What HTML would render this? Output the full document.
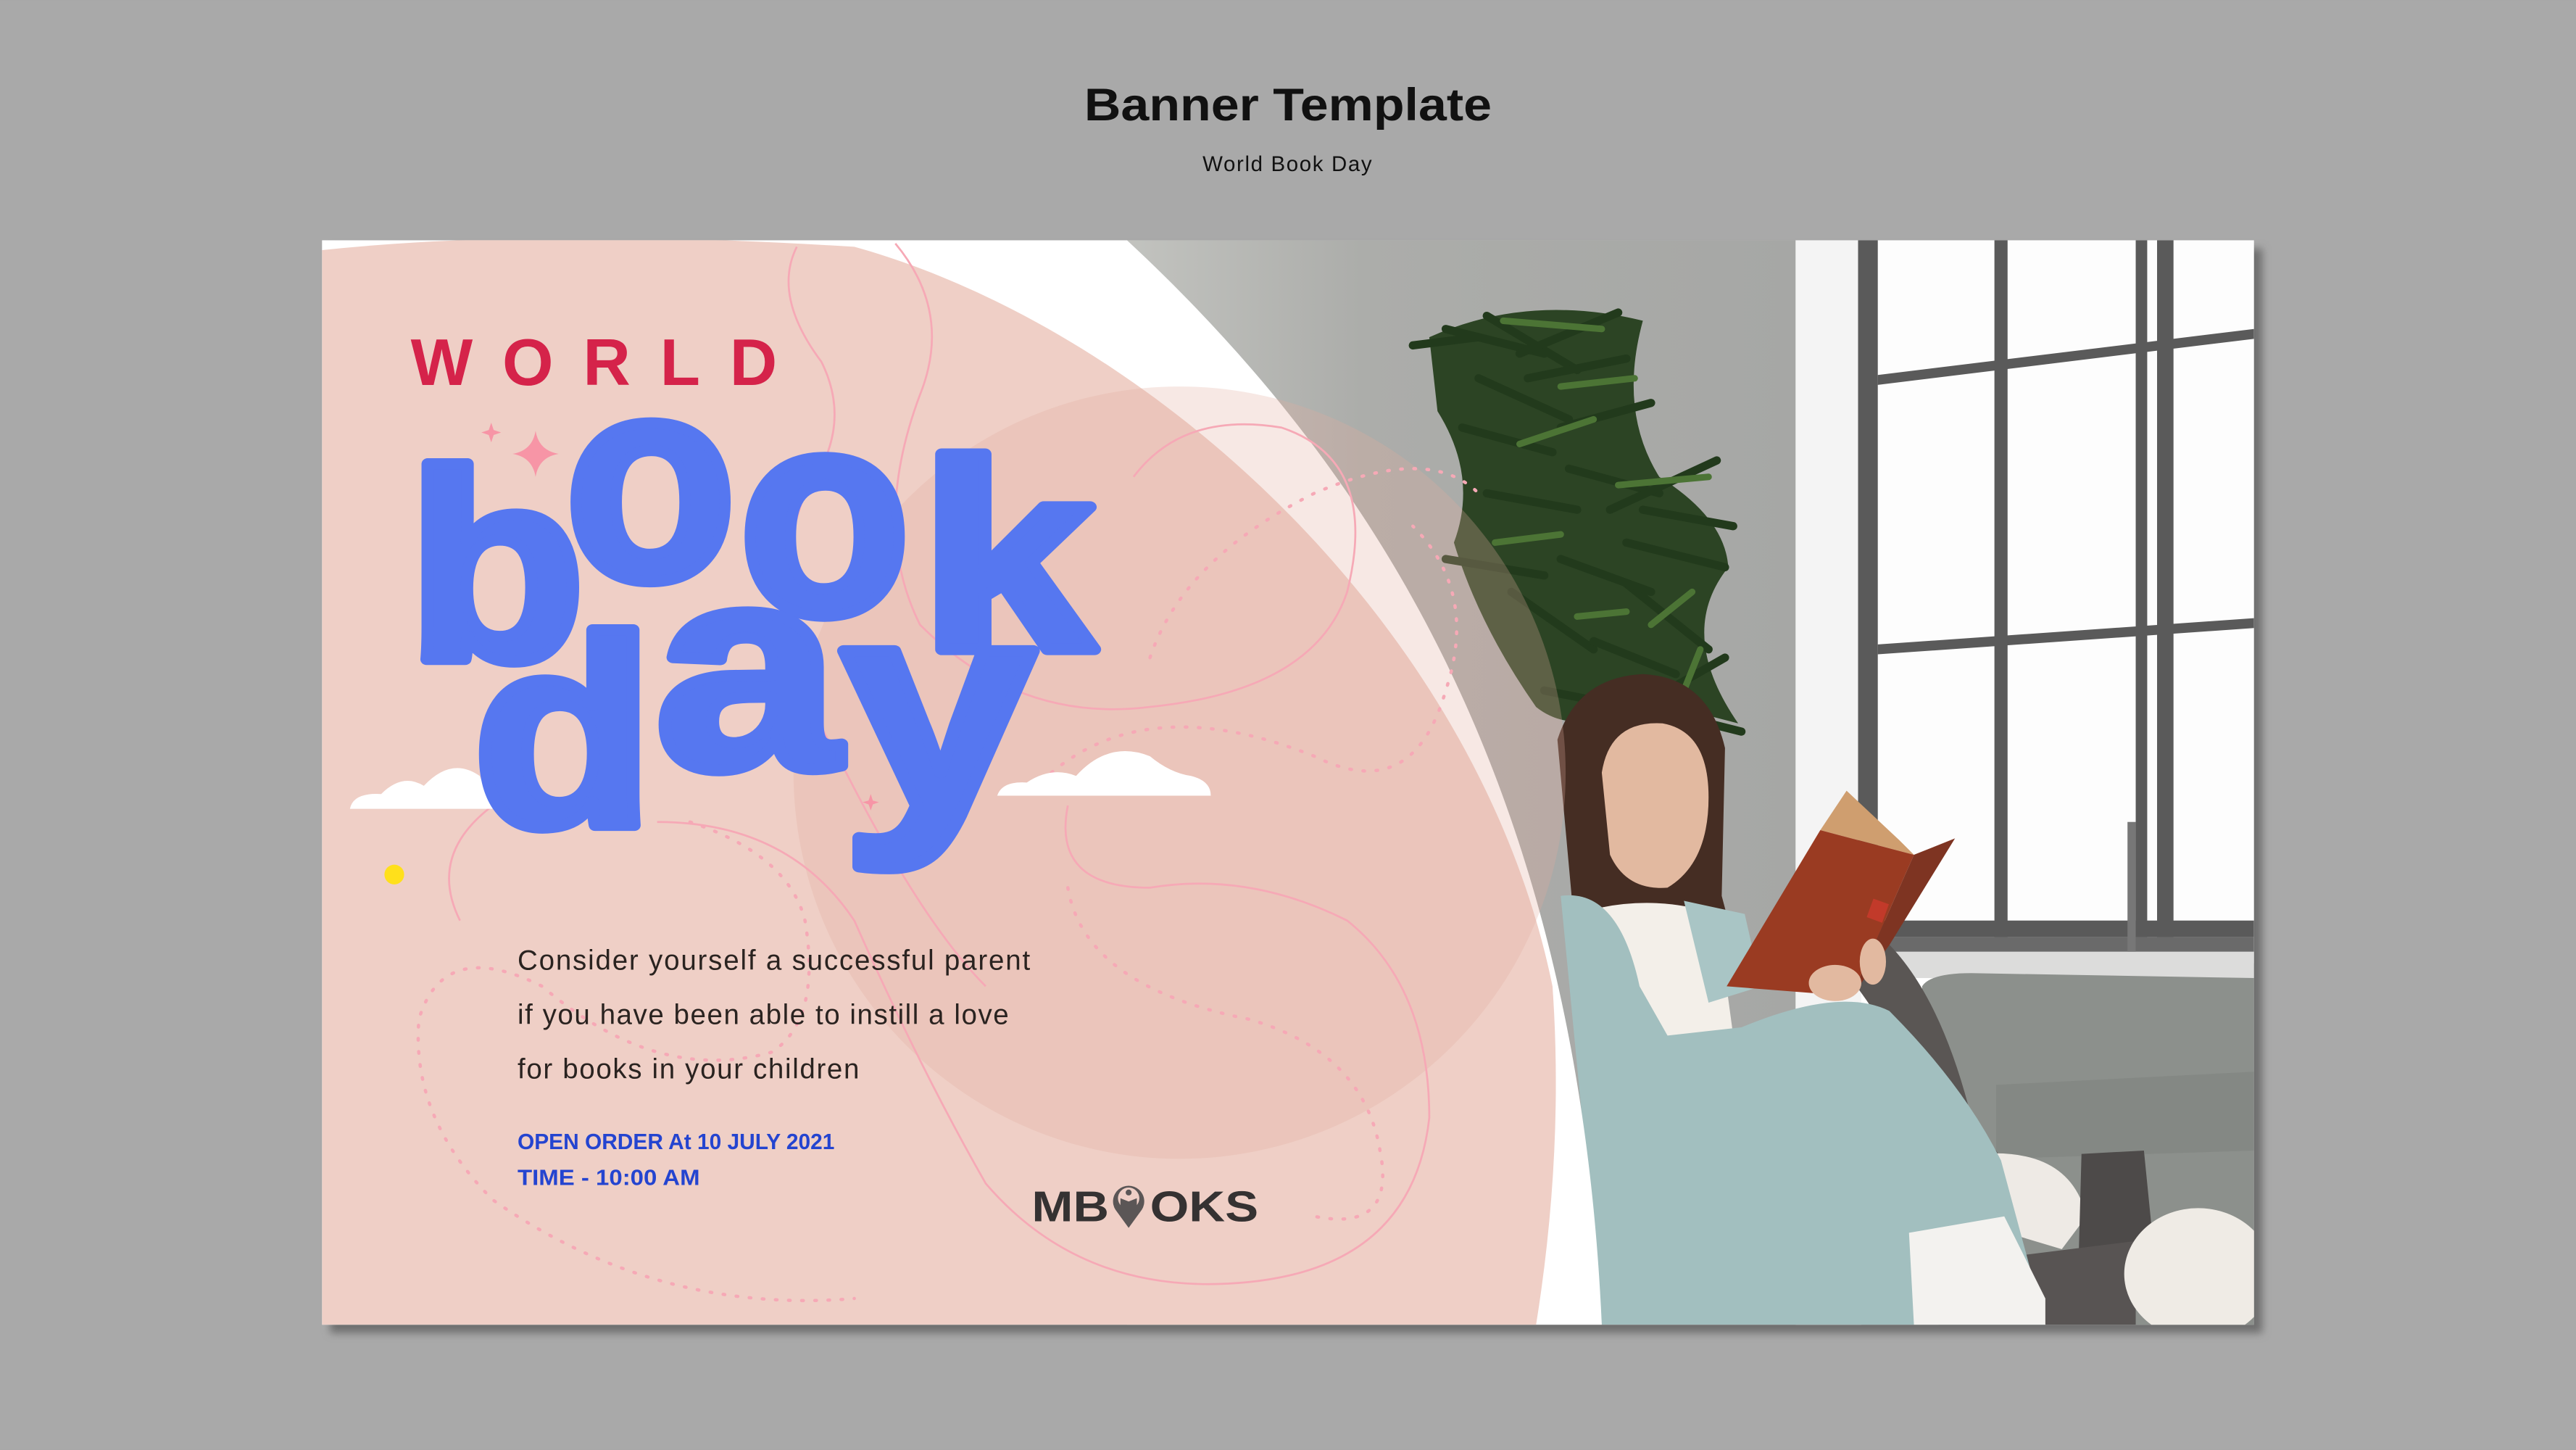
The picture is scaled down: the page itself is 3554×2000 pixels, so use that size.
<!DOCTYPE html>
<html><head><meta charset="utf-8"><style>
html,body{margin:0;padding:0;background:#a9a9a9;}
svg{display:block}
</style></head><body>
<svg width="3554" height="2000" viewBox="0 0 1568 882" xmlns="http://www.w3.org/2000/svg" font-family="Liberation Sans, sans-serif">
<defs>
<filter id="sh" x="-5%" y="-5%" width="110%" height="115%"><feGaussianBlur stdDeviation="2.5"/></filter>
<clipPath id="bn"><rect x="196" y="146" width="1176" height="660"/></clipPath>
<linearGradient id="wall" x1="0" x2="1"><stop offset="0" stop-color="#c2c3bf"/><stop offset="0.35" stop-color="#acadaa"/><stop offset="1" stop-color="#a6a7a5"/></linearGradient>
</defs>
<rect width="1568" height="882" fill="#a9a9a9"/>
<text x="660" y="73" font-size="28" font-weight="700" fill="#111" textLength="248" lengthAdjust="spacingAndGlyphs">Banner Template</text>
<text x="732" y="104" font-size="13" fill="#111" textLength="103">World Book Day</text>
<rect x="201" y="151" width="1176" height="660" fill="#6e6e6e" filter="url(#sh)"/>
<g clip-path="url(#bn)">
<rect x="196" y="146" width="1176" height="660" fill="#fff"/>
<rect x="686" y="146" width="407" height="660" fill="url(#wall)"/>
<rect x="1093" y="146" width="40" height="660" fill="#f4f4f4"/>
<rect x="1133" y="146" width="239" height="440" fill="#fdfdfd"/>
<g fill="#5a5a5a">
<rect x="1131" y="146" width="12" height="440"/>
<rect x="1214" y="146" width="8" height="430"/>
<rect x="1300" y="146" width="7" height="430"/>
<rect x="1313" y="146" width="10" height="430"/>
<polygon points="1143,228 1372,200 1372,206 1143,234"/>
<polygon points="1143,392 1372,376 1372,382 1143,398"/>
<rect x="1143" y="560" width="229" height="10"/>
<rect x="1131" y="570" width="241" height="9" fill="#6a6a6a"/>
<rect x="1295" y="500" width="5" height="80" fill="#777"/>
</g>
<rect x="1133" y="579" width="239" height="16" fill="#dcdcdb"/>
<path d="M1170,600 Q1175,592 1200,592 L1372,595 L1372,806 L1170,806 Z" fill="#8c908c"/>
<path d="M1215,660 L1372,652 L1372,700 L1215,705 Z" fill="#848884"/>
<path d="M1143,568 Q1180,600 1200,680 L1218,704 L1190,712 Q1160,640 1130,600 Z" fill="#5a5654"/>
<path d="M1205,702 Q1260,698 1270,740 L1255,760 L1205,745 Z" fill="#eeeae5"/>
<path d="M1267,702 L1305,700 L1312,770 L1265,775 Z" fill="#4d4a49"/>
<path d="M1180,770 L1300,755 L1300,806 L1180,806 Z" fill="#585453"/>
<ellipse cx="1338" cy="775" rx="45" ry="40" fill="#efebe5"/>
<!-- plant -->
<path d="M870,205 Q930,178 1000,195 Q985,250 1010,290 Q1050,315 1052,345 Q1020,385 1058,440 L1000,425 Q960,450 935,430 Q900,380 885,330 Q900,290 875,250 Z" fill="#2c4424"/>
<g stroke-linecap="round" fill="none">
<g stroke="#223a1c" stroke-width="5">
<path d="M880,200 L940,215"/><path d="M905,192 L960,225"/><path d="M925,215 L985,190"/>
<path d="M930,230 L990,218"/><path d="M900,230 L955,255"/><path d="M890,260 L945,275"/>
<path d="M950,260 L1005,245"/><path d="M955,285 L1010,300"/><path d="M905,300 L960,310"/>
<path d="M990,330 L1050,345"/><path d="M980,310 L1045,280"/><path d="M990,355 L1040,395"/>
<path d="M950,340 L1005,360"/><path d="M920,360 L970,395"/><path d="M970,390 L1020,410"/>
<path d="M1015,420 L1050,400"/><path d="M1020,435 L1060,445"/><path d="M880,340 L940,350"/>
<path d="M940,420 L990,430"/><path d="M1000,310 L1055,320"/><path d="M860,210 L900,205"/>
</g>
<g stroke="#4c7435" stroke-width="4">
<path d="M915,195 L975,200"/><path d="M950,235 L995,230"/><path d="M925,270 L970,255"/>
<path d="M985,295 L1040,290"/><path d="M910,330 L950,325"/><path d="M1005,380 L1030,360"/>
<path d="M1025,420 L1035,395"/><path d="M960,375 L990,372"/>
</g>
</g>
<!-- woman -->
<path d="M948,450 Q960,412 1000,410 Q1040,412 1050,455 L1048,545 L1052,560 L958,560 Z" fill="#452d23"/>
<path d="M975,470 Q980,438 1012,440 Q1040,445 1040,485 Q1040,525 1015,540 Q990,542 980,520 Z" fill="#e2b9a0"/>
<path d="M975,552 Q1010,545 1045,556 L1055,630 L978,632 Z" fill="#f3efe9"/>
<path d="M950,545 Q985,540 998,600 L1015,630 L1060,625 Q1120,600 1150,615 Q1195,660 1218,706 L1245,806 L975,806 Q965,700 950,545 Z" fill="#a2bfbf"/>
<path d="M1025,548 L1062,556 L1072,600 L1040,610 Z" fill="#a9c5c5"/>
<path d="M1162,750 L1220,740 L1245,790 L1245,806 L1165,806 Z" fill="#f3f2ef"/>
<polygon points="1108,505 1124,481 1156,511 1165,520" fill="#cf9e6f"/>
<polygon points="1051,600 1108,505 1165,520 1127,606" fill="#9a3b22"/>
<polygon points="1165,520 1190,510 1150,575 1127,606" fill="#7e3422"/>
<rect x="1138" y="548" width="10" height="12" fill="#c23a2a" transform="rotate(20 1143 554)"/>
<ellipse cx="1117" cy="598" rx="16" ry="11" fill="#e2b9a0"/>
<ellipse cx="1140" cy="585" rx="8" ry="14" fill="#e2b9a0"/>
<path d="M196,146 L686,146 C830,280 960,470 975,806 L196,806 Z" fill="#fff"/>
<path d="M196,152 Q330,138 520,150 C700,200 900,380 945,600 Q952,700 935,806 L196,806 Z" fill="#efcfc6"/>
<circle cx="718" cy="470" r="235" fill="#e3ad9e" opacity="0.28"/>
<g fill="none" stroke="#f6a9b6" stroke-width="1.2">
<path d="M485,150 Q470,180 500,220 Q520,260 490,300 Q460,380 510,460 Q560,560 600,600"/>
<path d="M545,148 Q580,190 560,240 Q530,320 560,380 Q620,440 700,430 Q800,420 820,360 Q840,280 780,260 Q720,250 690,290"/>
<path d="M300,490 Q260,520 280,560"/>
<path d="M400,500 Q480,500 520,560 Q560,650 600,720 Q660,790 760,780 Q860,770 870,680 Q870,600 820,560 Q760,530 700,540 Q640,540 650,490"/>
</g>
<g fill="none" stroke="#f6a9b6" stroke-width="2" stroke-dasharray="1 7" stroke-linecap="round">
<path d="M420,500 Q480,520 490,560 Q500,620 470,640 Q400,660 330,600 Q270,570 255,620 Q250,680 300,730 Q400,800 520,790"/>
<path d="M700,400 Q720,340 800,300 Q870,270 900,300"/>
<path d="M640,470 Q700,420 800,460 Q860,490 880,420 Q900,360 860,320"/>
<path d="M650,540 Q660,600 760,620 Q830,640 840,700 Q850,750 800,740"/>
</g>
<path d="M213,492 Q215,482 232,483 Q245,470 258,478 Q275,460 292,472 L300,492 Z" fill="#fff"/>
<path d="M607,484 Q610,475 625,476 Q640,466 655,472 Q675,450 700,460 Q712,470 725,472 Q737,475 737,484 Z" fill="#fff"/>
<path d="M326,262 Q328,274 340,276 Q328,278 326,290 Q324,278 312,276 Q324,274 326,262Z" fill="#f795a6"/>
<path d="M299,257 L300.5,261.5 L305,263 L300.5,264.5 L299,269 L297.5,264.5 L293,263 L297.5,261.5Z" fill="#f795a6"/>
<path d="M530,483 L531.3,487 L535,488 L531.3,489.3 L530,493 L528.7,489.3 L525,488 L528.7,487Z" fill="#f795a6"/>
<circle cx="240" cy="532" r="6" fill="#ffe01b"/>
<text x="250" y="234" font-size="40" font-weight="700" fill="#d5234a" letter-spacing="18">WORLD</text>
<g fill="#5677f0" stroke="#5677f0" stroke-width="7" stroke-linejoin="round" font-weight="700">
<text x="248" y="401" font-size="164" textLength="108" lengthAdjust="spacingAndGlyphs">b</text>
<text x="344" y="352" font-size="176" textLength="104" lengthAdjust="spacingAndGlyphs">o</text>
<text x="450" y="373" font-size="176" textLength="104" lengthAdjust="spacingAndGlyphs">o</text>
<text x="560" y="395" font-size="164" textLength="106" lengthAdjust="spacingAndGlyphs">k</text>
<text x="288" y="502" font-size="164" textLength="110" lengthAdjust="spacingAndGlyphs">d</text>
<text x="399" y="467" font-size="176" textLength="112" lengthAdjust="spacingAndGlyphs">a</text>
<text x="512" y="491" font-size="180" textLength="118" lengthAdjust="spacingAndGlyphs">y</text>
</g>
<g font-size="17" fill="#2a2320">
<text x="315" y="590" textLength="312">Consider yourself a successful parent</text>
<text x="315" y="623" textLength="299">if you have been able to instill a love</text>
<text x="315" y="656" textLength="208">for books in your children</text>
</g>
<g font-size="13.5" font-weight="700" fill="#2444d0">
<text x="315" y="699" textLength="193" lengthAdjust="spacingAndGlyphs">OPEN ORDER At 10 JULY 2021</text>
<text x="315" y="721" textLength="111" lengthAdjust="spacingAndGlyphs">TIME  - 10:00 AM</text>
</g>
<g font-size="26" font-weight="700" fill="#353232">
<text x="628" y="743" textLength="47" lengthAdjust="spacingAndGlyphs">MB</text>
<text x="700" y="743" textLength="66" lengthAdjust="spacingAndGlyphs">OKS</text>
</g>
<path d="M687,747 L679,736 A9.5,9.5 0 1 1 695,736 Z" fill="#5b5656"/>
<circle cx="687" cy="729" r="6.5" fill="#efcfc6"/>
<path d="M682,729 L687,731 L692,729 L692,735 L687,737 L682,735Z" fill="#5b5656"/>
<circle cx="687" cy="725.5" r="1.8" fill="#5b5656"/>
</g>
</svg>
</body></html>
